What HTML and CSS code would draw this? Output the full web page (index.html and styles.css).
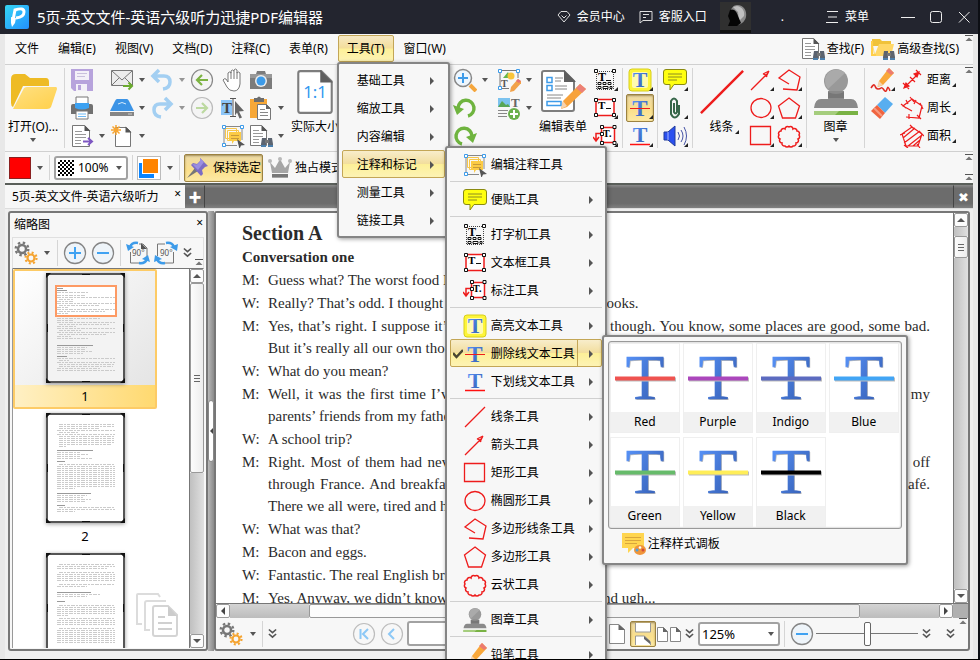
FILE: index.html
```html
<!DOCTYPE html>
<html lang="zh-CN">
<head>
    <meta charset="UTF-8">
    <title>迅捷PDF编辑器</title>
    <link rel="stylesheet" href="styles.css">
</head>
<body>
    <!-- Iconos -->
    <svg class="sprite" aria-hidden="true">
        <defs>
            <linearGradient id="gT" x1="0" y1="0" x2="1" y2="1"><stop offset="0" stop-color="#5b98ff"/><stop offset="1" stop-color="#2f55a8"/></linearGradient>
            <linearGradient id="gLogo" x1="0" y1="0" x2="1" y2="1"><stop offset="0" stop-color="#35d6f5"/><stop offset="1" stop-color="#2390ff"/></linearGradient>
            <linearGradient id="gFolder" x1="0" y1="0" x2="1" y2="1"><stop offset="0" stop-color="#ffe082"/><stop offset="1" stop-color="#ffd04a"/></linearGradient>
        </defs>
        <symbol id="i-logo" viewBox="0 0 24 24"><rect width="24" height="24" rx="2" fill="url(#gLogo)"/><path d="M8 15L10 5q9-3 9 2t-8 6" fill="none" stroke="#fff" stroke-width="3"/><path d="M6 12l5 1-1 5-3 4-1-4z" fill="#fff"/></symbol>
        <symbol id="i-vip" viewBox="0 0 14 14"><path d="M4 1.500h6l3 3.500-6 7-6-7z" fill="none" stroke="#ddd"/><path d="M4.500 5.500L7 8l2.500-2.500" fill="none" stroke="#ddd"/></symbol>
        <symbol id="i-chat" viewBox="0 0 14 14"><path d="M1 1.500h12v9H4L1 13z" fill="none" stroke="#ddd"/><path d="M4 4.500h6M4 7.500h3" stroke="#ddd"/></symbol>
        <symbol id="i-menu" viewBox="0 0 14 14"><path d="M2 1.500h11M3 7h9M1 12.500h12" stroke="#eee"/></symbol>
        <symbol id="i-min" viewBox="0 0 14 14"><path d="M0 7.500h14" stroke="#eee"/></symbol>
        <symbol id="i-max" viewBox="0 0 14 14"><rect x="1.500" y="1.500" width="11" height="11" rx="2" fill="none" stroke="#eee"/></symbol>
        <symbol id="i-close" viewBox="0 0 14 14"><path d="M2 2l10.500 10.500M12.500 2L2 12.500" stroke="#eee"/></symbol>
        <symbol id="i-avatar" viewBox="0 0 31 31"><rect width="31" height="31" fill="#303030"/><path d="M17 3c7 0 10 6 9 12-1 4-4 7-8 8l-2-8-5-6c0-3 3-6 6-6z" fill="#8a8a8a"/><path d="M17 4c6 1 8 6 7 10l-5 5-1-9-5-5z" fill="#c0c0c0"/><path d="M10 8c4-2 7 2 8 6l3 7-4 3H8l2-5-2-5z" fill="#050505"/><path d="M0 29.500h31" stroke="#111" stroke-width="3"/></symbol>

        <symbol id="i-folder" viewBox="0 0 48 38"><path d="M2 6q0-5 5-5h9l5 4h16q3 0 3 4v4H14L4 34q-2-1-2-4z" fill="#eebb25"/><path d="M14 17q1-3 4-3h29q1 0 1 2l-6 18q-1 2-4 2H4z" fill="url(#gFolder)"/></symbol>
        <symbol id="i-save" viewBox="0 0 24 24"><path d="M1 1h22v22H4l-3-3z" fill="#b7a3dc"/><path d="M5 3h14v9H5zM6 16h11v7H6z" fill="#f3f0f8"/><path d="M7 5.500h10M7 8.500h8" stroke="#c9c0dd"/><path d="M8 17h3v5H8z" fill="#b7a3dc"/></symbol>
        <symbol id="i-print" viewBox="0 0 24 24"><path d="M6 9V1h12v8" fill="#fff" stroke="#777"/><path d="M1 10q0-2 2-2h18q2 0 2 2v8H1z" fill="#717171"/><path d="M5 7h14v5q-7 3-14 0z" fill="#3da2f2"/><path d="M6 15h12v8H6z" fill="#fff" stroke="#777"/><path d="M8 18h8M8 20.500h8" stroke="#6fbaf5"/></symbol>
        <symbol id="i-export" viewBox="0 0 24 24"><path d="M2.500 1.500h12l5 5v16h-17z" fill="#fff" stroke="#777"/><path d="M14.500 1v6h6z" fill="#555"/><path d="M5 7.500h7M5 10.500h11M5 13.500h11M5 16.500h6M5 19.500h6" stroke="#999"/><path d="M13 17.500h8M18 14l4 3.500-4 3.500" fill="none" stroke="#7e57c2" stroke-width="2"/></symbol>
        <symbol id="i-mail" viewBox="0 0 24 24"><path d="M1.500 2.500h21v15h-21z" fill="#ececec" stroke="#777"/><path d="M2 3l10 9L22 3M2 17l7-7M22 17l-7-7" fill="none" stroke="#777"/><path d="M13 18h9M18.500 14.500L22 18l-3.500 3.500" fill="none" stroke="#6aaa2e" stroke-width="2"/></symbol>
        <symbol id="i-scan" viewBox="0 0 24 24"><path d="M7 3h10q1 0 2 2l5 10H0L5 5q1-2 2-2z" fill="#3c94e6"/><path d="M0 16h24v4H0z" fill="#858585"/><path d="M18 18h4" stroke="#ccc"/><path d="M8 8q4-3 8 0" stroke="#d6ebfc" fill="none"/></symbol>
        <symbol id="i-new" viewBox="0 0 24 24"><path d="M5.500 3.500h11l4 4v15h-15z" fill="#fff" stroke="#777"/><path d="M15.500 2.500v6h6z" fill="#555"/><path d="M1 6h10M6 1v10M2.500 2.500l7 7M9.500 2.500l-7 7" stroke="#f7a531" stroke-width="1.500"/></symbol>
        <symbol id="i-undo" viewBox="0 0 24 24"><path d="M9 2L3 8l6 6M3 8h11q6 0 6 6t-7 7" fill="none" stroke="#a3cff2" stroke-width="3.500"/></symbol>
        <symbol id="i-redo" viewBox="0 0 24 24"><path d="M15 2l6 6-6 6M21 8H10q-6 0-6 6t7 7" fill="none" stroke="#a3cff2" stroke-width="3.500"/></symbol>
        <symbol id="i-back" viewBox="0 0 24 24"><circle cx="12" cy="12" r="10.500" fill="#f4f4f4" stroke="#888" stroke-width="1.200"/><path d="M18 12H8M12 7l-5 5 5 5" fill="none" stroke="#7cb342" stroke-width="2.200"/></symbol>
        <symbol id="i-fwd" viewBox="0 0 24 24"><circle cx="12" cy="12" r="10.500" fill="#f4f4f4" stroke="#bbb" stroke-width="1.200"/><path d="M6 12h10M12 7l5 5-5 5" fill="none" stroke="#bcd9a0" stroke-width="2.200"/></symbol>
        <symbol id="i-hand" viewBox="0 0 24 24"><path d="M7 14V5q1.500-2 3 0V3q1.500-2 3 0V2q1.500-2 3 0v3q1.500-2 3 0v11q-1 7-6 7-5 0-7-4l-4-7q1-2 3-1z" fill="#fff" stroke="#777"/><path d="M10 4v7M13 3v8M16 4v7" stroke="#777"/></symbol>
        <symbol id="i-seltext" viewBox="0 0 24 24"><path d="M0 4h11v15H0z" fill="#8cc5f8"/><text x="1" y="17" font-family="Liberation Serif" font-weight="bold" font-size="15" fill="#444">T</text><path d="M9 2.500h6M12 2.500v18M9 20.500h6" stroke="#555"/><path d="M14 5l9 10-5 .5 3 6-2.500 1-2.500-6-2 3z" fill="#666"/></symbol>
        <symbol id="i-notes" viewBox="0 0 24 24"><path d="M4.500 4.500h11v10h-11zM6.500 6.500h11v10h-11z" fill="none" stroke="#f7c64a"/><path d="M8 8h12v9h-7l-2 3v-3H8z" fill="#fbcb45"/><path d="M10 11.500h8M10 14.500h8" stroke="#c79a3a"/><path d="M3 4v17M21 4v12M4 2.500h16M4 21.500h12" stroke="#888"/><path d="M1.500 1.500h3v3h-3zM19.500 1.500h3v3h-3zM1.500 19.500h3v3h-3z" fill="#fff" stroke="#3d9be9"/><path d="M16 15l8 6-4 .5-1.500 3.500z" fill="#555"/></symbol>
        <symbol id="i-camera" viewBox="0 0 24 24"><path d="M1 6h6l1-3h8l1 3h6v15H1z" fill="#7c7c7c"/><path d="M1 6h22v4H1z" fill="#999"/><circle cx="12" cy="13" r="6" fill="#eee"/><circle cx="12" cy="13" r="4.500" fill="#3d9be9"/></symbol>
        <symbol id="i-paste" viewBox="0 0 24 24"><path d="M1 3h17v19H1z" fill="#f7a838"/><path d="M5 2h3q2-3 4 0h3v4H5z" fill="#6d6d6d"/><path d="M8.500 8.500h9l4 4v11h-13z" fill="#fff" stroke="#777"/><path d="M11 13.500h5M11 16.500h8M11 19.500h8" stroke="#888"/><path d="M17 8v5h5z" fill="#666"/></symbol>
        <symbol id="i-find" viewBox="0 0 24 24"><path d="M1.500 1.500h11l5 5v15h-16z" fill="#fff" stroke="#777"/><path d="M12.500 1v6h6z" fill="#555"/><path d="M4 6.500h6M4 9.500h10M4 12.500h10M4 15.500h6M4 18.500h6" stroke="#999"/><path d="M13 14h4v9h-5v-3zM19 14h4l1 6v3h-5z" fill="#5c6470"/><path d="M16 16h4v3h-4z" fill="#777"/><path d="M12 22h5M19 22h5" stroke="#3d9be9"/></symbol>
        <symbol id="i-ffind" viewBox="0 0 24 24"><path d="M1 2h8l2 2h9v5H1z" fill="#f0c23a"/><path d="M1 4l2 15h17l3-12H8L4 17z" fill="#ffd766"/><path d="M1 4v14h4" stroke="#ffcf4a" fill="none" stroke-width="2"/><path d="M13 14h4v9h-5v-3zM19 14h4l1 6v3h-5z" fill="#5c6470"/><path d="M16 16h4v3h-4z" fill="#777"/><path d="M12 22h5M19 22h5" stroke="#3d9be9"/></symbol>
        <symbol id="i-actual" viewBox="0 0 36 44"><path d="M2 4q0-2 2-2h20l10 10v28q0 2-2 2H4q-2 0-2-2z" fill="#fff" stroke="#7d7d7d" stroke-width="2"/><path d="M23 1v12h12z" fill="#5f5f5f"/><text x="18" y="28" text-anchor="middle" font-family="Noto Sans" font-size="16" fill="#3498f0">1:1</text></symbol>
        <symbol id="i-zoom" viewBox="0 0 24 24"><path d="M17 17l6 6" stroke="#f5a63c" stroke-width="4"/><circle cx="10" cy="10" r="8.500" fill="#eef6fd" stroke="#888" stroke-width="1.500"/><path d="M10 5v10M5 10h10" stroke="#3d9be9" stroke-width="2"/></symbol>
        <symbol id="i-ccw" viewBox="0 0 24 24"><path d="M5 12a8 8 0 1 1 10 8" fill="none" stroke="#6fb43f" stroke-width="3.500"/><path d="M0 9l11 4-7 6z" fill="#6fb43f"/></symbol>
        <symbol id="i-cw" viewBox="0 0 24 24"><path d="M19 12a8 8 0 1 0-10 8" fill="none" stroke="#6fb43f" stroke-width="3.500"/><path d="M24 9l-11 4 7 6z" fill="#6fb43f"/></symbol>
        <symbol id="i-edit" viewBox="0 0 24 24"><path d="M3 4v16M21 4v6M4 2.500h16M4 20.500h8" stroke="#777"/><path d="M6 10l5-6 3 6z" fill="#65b64c"/><circle cx="14" cy="8" r="3.500" fill="#f9c53b"/><text x="4" y="19" font-family="Liberation Serif" font-weight="bold" font-size="10" fill="#555">T</text><path d="M1.500 1.500h3v3h-3zM19.500 1.500h3v3h-3zM1.500 18.500h3v3h-3z" fill="#fff" stroke="#3d9be9"/><path d="M21 11l4 3-8 9-4 1 1-5z" fill="#f2a24a"/><path d="M21 11l3 2-2 2-3-2z" fill="#e57373"/></symbol>
        <symbol id="i-addimg" viewBox="0 0 24 24"><path d="M1 2h12v9H1z" fill="#7cc3ef"/><path d="M1 11l4-6 4 4 2-1 2 3z" fill="#58a657"/><text x="14" y="11" font-family="Liberation Serif" font-weight="bold" font-size="13" fill="#666">T</text><path d="M1 14.500h10M1 17.500h9M1 20.500h9" stroke="#888"/><circle cx="17" cy="18" r="6" fill="#6ab04c"/><path d="M17 14v8M13 18h8" stroke="#fff" stroke-width="2"/></symbol>
        <symbol id="i-form" viewBox="0 0 46 46"><path d="M2 4q0-2 2-2h20l10 10v28q0 2-2 2H4q-2 0-2-2z" fill="#fff" stroke="#7d7d7d" stroke-width="2"/><path d="M24 1v12h12z" fill="#5f5f5f"/><path d="M7 8.500h5v5H7zM7 16.500h5v5H7zM7 32.500h14v4H7z" fill="none" stroke="#3d9be9" stroke-width="1.500"/><path d="M15 9h8M15 12h6M15 17h12M15 20h12M7 26h16M7 29h14" stroke="#888"/><path d="M40 15l6 5-19 18-6 2 2-8z" fill="#f7a23b"/><path d="M40 15l6 5-4 4-6-5z" fill="#ec8077"/><path d="M23 32l4 5-6 3z" fill="#f6d3b0"/></symbol>

        <symbol id="i-type" viewBox="0 0 24 24"><path d="M3.500 4v17M20.500 4v17M4 3.500h16M4 21.500h16" stroke="#444" stroke-dasharray="1 1"/><path d="M1.500 1.500h3v3h-3zM19.500 1.500h3v3h-3z" fill="#fff" stroke="#111"/><text x="5" y="13" font-family="Liberation Serif" font-weight="bold" font-size="12">T</text><path d="M13 12.500h5" stroke="#111"/><path d="M5 14.500h3v2H5zM10 14.500h3v2h-3zM15 14.500h3v2h-3zM5 18.500h3v2H5zM10 18.500h5v2h-5zM17 18.500h2v2h-2z" fill="#fff" stroke="#111"/></symbol>
        <symbol id="i-textbox" viewBox="0 0 24 24"><path d="M3 3.500h18v16H3z" fill="#fff" stroke="#ee1c1c" stroke-width="1.500"/><text x="5" y="13" font-family="Liberation Serif" font-weight="bold" font-size="11">T</text><path d="M13 12.500h5" stroke="#111"/><path d="M1.500 2.500h3v3h-3zM19.500 2.500h3v3h-3zM1.500 17.500h3v3h-3zM19.500 17.500h3v3h-3z" fill="#fff" stroke="#111"/></symbol>
        <symbol id="i-callout" viewBox="0 0 24 24"><path d="M8.500 3.500h13v15h-13z" fill="#fff" stroke="#ee1c1c" stroke-width="1.500"/><path d="M8 9.500H3V17M0 13l3 4 3-4" fill="none" stroke="#ee1c1c" stroke-width="1.500"/><text x="10" y="13" font-family="Liberation Serif" font-weight="bold" font-size="10">T.</text><path d="M7.500 1.500h3v3h-3zM20 1.500h3v3h-3zM7.500 8.500h3v3h-3zM7.500 17.500h3v3h-3zM20 17.500h3v3h-3z" fill="#fff" stroke="#111"/></symbol>
        <symbol id="i-hl" viewBox="0 0 24 24"><rect x="1" y="1" width="22" height="22" rx="3" fill="#fdf53a" stroke="#d8cf1a"/><rect x="4" y="4" width="16" height="16" rx="2" fill="#fffbb0"/><text x="12" y="19" text-anchor="middle" font-family="Liberation Serif" font-weight="bold" font-size="22" fill="url(#gT)">T</text></symbol>
        <symbol id="i-strike" viewBox="0 0 24 24"><text x="12" y="20" text-anchor="middle" font-family="Liberation Serif" font-weight="bold" font-size="23" fill="url(#gT)">T</text><path d="M2 12.500h20" stroke="#ee1c1c"/></symbol>
        <symbol id="i-under" viewBox="0 0 24 24"><text x="12" y="18" text-anchor="middle" font-family="Liberation Serif" font-weight="bold" font-size="22" fill="url(#gT)">T</text><path d="M2 20.500h20" stroke="#ff1010" stroke-width="1.500"/></symbol>
        <symbol id="i-note" viewBox="0 0 24 24"><path d="M3 1.500h18q2.500 0 2.500 2.500v10q0 2.500-2.500 2.500H11L7 22v-5.500H3Q.5 16.500.5 14V4Q.5 1.500 3 1.500z" fill="#ffff10" stroke="#8a8a10"/><path d="M5 6h14M5 9h14M5 12h9" stroke="#8c8c20"/></symbol>
        <symbol id="i-clip" viewBox="0 0 24 24"><path d="M11 7v9q1.500 3 3 0V5q-3-5-6 0v13q3.500 7 8 0V9" fill="none" stroke="#37674a" stroke-width="2"/></symbol>
        <symbol id="i-sound" viewBox="0 0 24 24"><path d="M1 8h4l7-6v20l-7-6H1z" fill="#2a50f0" stroke="#203a9a"/><path d="M5 8v8" stroke="#a8b8ff"/><path d="M15 8q3 4 0 8M18 6q4 6 0 12M21 3q5 9 0 18" fill="none" stroke="#4452a5"/></symbol>
        <symbol id="i-line" viewBox="0 0 24 24"><path d="M2 22L22 2" stroke="#ee1c1c" stroke-width="1.300"/></symbol>
        <symbol id="i-arrow" viewBox="0 0 24 24"><path d="M2 22L19 5M20 3l-6 3M20 3l-3 6M14 6l3 1 1 2" fill="none" stroke="#ee1c1c" stroke-width="1.300"/></symbol>
        <symbol id="i-rect" viewBox="0 0 24 24"><path d="M1.500 2.500h20v18h-20z" fill="none" stroke="#ee1c1c" stroke-width="1.300"/></symbol>
        <symbol id="i-ell" viewBox="0 0 24 24"><ellipse cx="12" cy="12" rx="10" ry="9.500" fill="none" stroke="#ee1c1c" stroke-width="1.300"/></symbol>
        <symbol id="i-pline" viewBox="0 0 24 24"><path d="M12 16L2 10 12 2l11 7-3 13-14-1" fill="none" stroke="#ee1c1c" stroke-width="1.300"/></symbol>
        <symbol id="i-poly" viewBox="0 0 24 24"><path d="M12 2l10.500 8-4 12h-13l-4-12z" fill="none" stroke="#ee1c1c" stroke-width="1.300"/></symbol>
        <symbol id="i-cloud" viewBox="0 0 24 24"><path d="M8 5a2.500 2.500 0 0 1 4-2 2.500 2.500 0 0 1 4 2 2.500 2.500 0 0 1 4 2 2.500 2.500 0 0 1 2 4 2.500 2.500 0 0 1-1 4 2.500 2.500 0 0 1-2 4 2.500 2.500 0 0 1-3 3 2.500 2.500 0 0 1-4 0 2.500 2.500 0 0 1-4 0 2.500 2.500 0 0 1-3-3 2.500 2.500 0 0 1-2-4 2.500 2.500 0 0 1-1-4 2.500 2.500 0 0 1 2-4 2.500 2.500 0 0 1 4-2z" fill="none" stroke="#ee1c1c" stroke-width="1.500"/></symbol>
        <symbol id="i-bigline" viewBox="0 0 48 48"><path d="M2 46L46 2" stroke="#ee1c1c" stroke-width="2.500"/></symbol>
        <symbol id="i-stamp" viewBox="0 0 46 46"><circle cx="23" cy="12" r="12" fill="#999"/><path d="M15 4a12 12 0 0 1 17 0L15 20a12 12 0 0 1 0-16z" fill="#aaa"/><path d="M15 22h16v8h7q6 0 7 9H1q1-9 7-9h7z" fill="#8a8a8a"/><path d="M15 23q8 4 16 0v6H15z" fill="#777"/><path d="M1 42h44v4H1z" fill="#79b244"/><path d="M1 42h25l-4 4H1z" fill="#a5cd7d"/></symbol>
        <symbol id="i-pencil" viewBox="0 0 24 24"><path d="M19 0l5 5-11 12-5 2 1-6z" fill="#f9a83a"/><path d="M19 0l5 5-3 2-5-4z" fill="#ec7b70"/><path d="M9 13l4 4-6 2z" fill="#f3d2ae"/><path d="M1 20q3-5 4-2t3 3 3-1 3 2 3-1 3 2" fill="none" stroke="#e02a20" stroke-width="1.500"/></symbol>
        <symbol id="i-eraser" viewBox="0 0 24 24"><path d="M15 1l8 7-8 9-8-8z" fill="#58aef0"/><path d="M7 9l8 8-5 6-9-8z" fill="#f0643f"/><path d="M4 12l8 8" stroke="#f79a80" stroke-width="2"/></symbol>
        <symbol id="i-dist" viewBox="0 0 24 24"><path d="M5 19L19 5M19 4l-5 2 3 3zM4 20l2-5 3 3zM16 2l5 5M3 15l6 6M10 9l5 5" fill="#ee1c1c" stroke="#ee1c1c" stroke-width="1.200"/></symbol>
        <symbol id="i-perim" viewBox="0 0 24 24"><path d="M12 15L3 10l9-7 10 7-3 12-13-1M10 1l4 5M20 7l3 6M1 8l5 4M17 19l4 4M9 18v5M16 4l-2 4M6 4l2 4" fill="none" stroke="#ee1c1c" stroke-width="1.200"/></symbol>
        <symbol id="i-area" viewBox="0 0 24 24"><path d="M12 3l10 7-4 12H6L2 10zM3 14L15 4M4 19L20 7M8 22L22 11M13 22l7-6M10 1l4 4M20 8l4 4M0 11l5-2M4 21l4 3M17 20l3 4" fill="none" stroke="#ee1c1c" stroke-width="1.200"/></symbol>
        <symbol id="i-palette" viewBox="0 0 24 24"><path d="M0 1h22v15H11l-5 5v-5H0z" fill="#ffd54f"/><path d="M3 5.500h16M3 8.500h16M3 11.500h12" stroke="#d9a63c"/><ellipse cx="18" cy="18" rx="6" ry="5" fill="#f0953a"/><circle cx="15" cy="18" r="1.500" fill="#4aa3e0"/><circle cx="18" cy="15.500" r="1.300" fill="#fff"/><circle cx="21" cy="18" r="1.500" fill="#d24a3a"/></symbol>
        <symbol id="i-pin" viewBox="0 0 24 24"><path d="M1 22l8-10 3 3z" fill="#777"/><path d="M14 2l8 8-3 1-3 3 1 4-2 2L5 9l2-2 4 1 3-3z" fill="#7c6cc4"/><path d="M14 2l4 4-6 8-6-6 5 .5 3-3z" fill="#9a8ee0"/></symbol>
        <symbol id="i-crown" viewBox="0 0 24 24"><path d="M2 6l5 6 5-9 5 9 5-6-2 11H4zM4 18h16v4H4z" fill="#a5a5a5"/><path d="M4 19.500h16" stroke="#777" stroke-width="3"/><circle cx="2" cy="5" r="2" fill="#b9b9b9"/><circle cx="12" cy="3" r="2" fill="#b9b9b9"/><circle cx="22" cy="5" r="2" fill="#b9b9b9"/></symbol>
        <symbol id="i-fill" viewBox="0 0 24 24"><rect x=".5" y=".5" width="23" height="23" fill="#fff" stroke="#bbb"/><path d="M2 7h15v15H2z" fill="#0a84ff"/><path d="M5 2h17v16H5z" fill="#fff"/><path d="M6 3h15v14H6z" fill="#ff8400"/></symbol>
        <symbol id="i-gears" viewBox="0 0 24 24"><circle cx="8" cy="8" r="4" fill="none" stroke="#777" stroke-width="2.500"/><circle cx="8" cy="8" r="6.300" fill="none" stroke="#777" stroke-width="2.400" stroke-dasharray="2.400 2.550"/><circle cx="17" cy="17" r="3.500" fill="none" stroke="#f5a431" stroke-width="2.200"/><circle cx="17" cy="17" r="5.500" fill="none" stroke="#f5a431" stroke-width="2.200" stroke-dasharray="2 2.320"/></symbol>
        <symbol id="i-plus" viewBox="0 0 24 24"><circle cx="12" cy="12" r="10.500" fill="#eef4f9" stroke="#858585" stroke-width="1.300"/><path d="M12 6v12M6 12h12" stroke="#3fa2f2" stroke-width="2"/></symbol>
        <symbol id="i-minus" viewBox="0 0 24 24"><circle cx="12" cy="12" r="10.500" fill="#eef4f9" stroke="#858585" stroke-width="1.300"/><path d="M6 12h12" stroke="#3fa2f2" stroke-width="2"/></symbol>
        <symbol id="i-first" viewBox="0 0 24 24"><circle cx="12" cy="12" r="10.500" fill="#f7f7f7" stroke="#bdbdbd" stroke-width="1.200"/><path d="M8.500 7v10M16 7l-5 5 5 5" fill="none" stroke="#8cc8f6" stroke-width="2"/></symbol>
        <symbol id="i-prev" viewBox="0 0 24 24"><circle cx="12" cy="12" r="10.500" fill="#f7f7f7" stroke="#bdbdbd" stroke-width="1.200"/><path d="M14 7l-5 5 5 5" fill="none" stroke="#8cc8f6" stroke-width="2"/></symbol>
        <symbol id="i-rotl" viewBox="0 0 24 24"><path d="M4.500 11v11h9M13 3h4l4 4v9" fill="none" stroke="#777"/><path d="M15 2v6h6z" fill="#555"/><text x="6" y="15" font-family="Noto Sans" font-size="8" fill="#555">90°</text><path d="M12 2Q6 1 4 6M13 22q6 1 8-4" fill="none" stroke="#3d9be9" stroke-width="2.500"/><path d="M0 3l2 7 6-4zM24 21l-2-7-6 4z" fill="#3d9be9"/></symbol>
        <symbol id="i-rotr" viewBox="0 0 24 24"><path d="M19.500 11v11h-9M11 3H3.500v12" fill="none" stroke="#777"/><text x="6" y="15" font-family="Noto Sans" font-size="8" fill="#555">90°</text><path d="M12 2q6-1 8 4M11 22q-6 1-8-4" fill="none" stroke="#3d9be9" stroke-width="2.500"/><path d="M24 3l-1 7-7-4zM0 21l1-7 7 4z" fill="#3d9be9"/></symbol>
        <symbol id="i-more" viewBox="0 0 10 12"><path d="M1 1l4 3.500L9 1M1 6l4 3.500L9 6" fill="none" stroke="#555" stroke-width="1.800"/></symbol>
        <symbol id="i-over" viewBox="0 0 8 8"><path d="M0 .5h8" stroke="#555"/><path d="M4 2.500L7.500 6h-7z" fill="#777"/></symbol>
        <symbol id="i-page" viewBox="0 0 18 24"><path d="M1.500 2.500h9l6 5v14h-15z" fill="#fff" stroke="#888"/><path d="M10.500 2v6H17z" fill="#666"/></symbol>
        <symbol id="i-cont" viewBox="0 0 24 24"><path d="M4.500 1v9h15V1" fill="#fff" stroke="#999"/><path d="M4.500 23v-9h9l6 6v3" fill="#fff" stroke="#999"/><path d="M13 14v3l6 5v-3z" fill="#666"/></symbol>
        <symbol id="i-two" viewBox="0 0 24 24"><path d="M.5 5.500h6l4 4v10H.5zM13.500 5.500h6l4 4v10h-10z" fill="#fff" stroke="#888"/><path d="M6 5v5h5zM19 5v5h5z" fill="#666"/></symbol>
        <symbol id="i-check" viewBox="0 0 10 10"><path d="M0 4l3.500 4L10 1" fill="none" stroke="#4a4632" stroke-width="2.500"/></symbol>
        <symbol id="i-pages" viewBox="0 0 42 46"><path d="M6 31H1V2q0-1 1-1h20l2 3M14 37H9V10q0-2 2-2h19" fill="none" stroke="#dcdcdc" stroke-width="2"/><path d="M17 15q0-2 2-2h13l9 9v19q0 2-2 2H19q-2 0-2-2z" fill="#fff" stroke="#d4d4d4" stroke-width="2"/><path d="M32 13v10h9z" fill="#ccc"/><path d="M22 24h7M22 30h14M22 36h14" stroke="#d0d0d0" stroke-width="2"/></symbol>
        <symbol id="i-bigT" viewBox="0 0 68 68"><text x="35" y="56" text-anchor="middle" font-family="Liberation Serif" font-size="63" fill="#bbb">T</text><text x="34" y="55" text-anchor="middle" font-family="Liberation Serif" font-size="63" fill="url(#gT)" stroke="url(#gT)" stroke-width=".6">T</text><path d="M5 35.500h60" stroke="#bbb" stroke-width="4"/><path d="M4 34.500h60" stroke="currentColor" stroke-width="4"/></symbol>
        <symbol id="i-frame" viewBox="0 0 79 110"><path d="M0 0h5L0 5zM79 0v5l-5-5zM0 110v-5l5 5zM79 110h-5l5-5zM36 1h8v1h-8zM36 108h8v1h-8zM1 51h1v8H1zM77 51h1v8h-1z" fill="#111"/></symbol>
    </svg>

    <header class="titlebar">
        <svg class="ic24"><use href="#i-logo"/></svg>
        <h1 class="app-title">5页-英文文件-英语六级听力迅捷PDF编辑器</h1>
        <button class="title-link"><svg class="ic14"><use href="#i-vip"/></svg>会员中心</button>
        <button class="title-link"><svg class="ic14"><use href="#i-chat"/></svg>客服入口</button>
        <svg class="avatar"><use href="#i-avatar"/></svg>
        <span class="user-name">.</span>
        <button class="title-link"><svg class="ic14"><use href="#i-menu"/></svg>菜单</button>
        <div class="window-buttons">
            <button aria-label="最小化"><svg class="ic14"><use href="#i-min"/></svg></button>
            <button aria-label="最大化"><svg class="ic14"><use href="#i-max"/></svg></button>
            <button aria-label="关闭"><svg class="ic14"><use href="#i-close"/></svg></button>
        </div>
    </header>

    <div class="client">
        <nav class="menubar">
            <button>文件</button>
            <button>编辑(E)</button>
            <button>视图(V)</button>
            <button>文档(D)</button>
            <button>注释(C)</button>
            <button>表单(R)</button>
            <div class="menu-root">
                <button class="open">工具(T)</button>
                <ul class="menu menu-tools">
                    <li><button>基础工具</button></li>
                    <li><button>缩放工具</button></li>
                    <li><button>内容编辑</button></li>
                    <li>
                        <button class="selected">注释和标记</button>
                        <ul class="menu menu-annot">
                            <li><button class="leaf"><svg class="ic24"><use href="#i-notes"/></svg>编辑注释工具</button></li>
                            <li class="divider"></li>
                            <li><button><svg class="ic24"><use href="#i-note"/></svg>便贴工具</button></li>
                            <li class="divider"></li>
                            <li><button><svg class="ic24"><use href="#i-type"/></svg>打字机工具</button></li>
                            <li><button><svg class="ic24"><use href="#i-textbox"/></svg>文本框工具</button></li>
                            <li><button><svg class="ic24"><use href="#i-callout"/></svg>标注工具</button></li>
                            <li class="divider"></li>
                            <li><button><svg class="ic24"><use href="#i-hl"/></svg>高亮文本工具</button></li>
                            <li>
                                <button class="selected split"><svg class="check"><use href="#i-check"/></svg><svg class="ic24"><use href="#i-strike"/></svg>删除线文本工具</button>
                                <div class="gallery-popup">
                                    <div class="gallery">
                                        <button class="swatch red"><svg><use href="#i-bigT"/></svg><span>Red</span></button>
                                        <button class="swatch purple"><svg><use href="#i-bigT"/></svg><span>Purple</span></button>
                                        <button class="swatch indigo"><svg><use href="#i-bigT"/></svg><span>Indigo</span></button>
                                        <button class="swatch blue"><svg><use href="#i-bigT"/></svg><span>Blue</span></button>
                                        <button class="swatch green"><svg><use href="#i-bigT"/></svg><span>Green</span></button>
                                        <button class="swatch yellow"><svg><use href="#i-bigT"/></svg><span>Yellow</span></button>
                                        <button class="swatch black"><svg><use href="#i-bigT"/></svg><span>Black</span></button>
                                    </div>
                                    <button class="palette-link"><svg class="ic24"><use href="#i-palette"/></svg>注释样式调板</button>
                                </div>
                            </li>
                            <li><button><svg class="ic24"><use href="#i-under"/></svg>下划线文本工具</button></li>
                            <li class="divider"></li>
                            <li><button><svg class="ic24"><use href="#i-line"/></svg>线条工具</button></li>
                            <li><button><svg class="ic24"><use href="#i-arrow"/></svg>箭头工具</button></li>
                            <li><button><svg class="ic24"><use href="#i-rect"/></svg>矩形工具</button></li>
                            <li><button><svg class="ic24"><use href="#i-ell"/></svg>椭圆形工具</button></li>
                            <li><button><svg class="ic24"><use href="#i-pline"/></svg>多边形线条工具</button></li>
                            <li><button><svg class="ic24"><use href="#i-poly"/></svg>多边形工具</button></li>
                            <li><button><svg class="ic24"><use href="#i-cloud"/></svg>云状工具</button></li>
                            <li class="divider"></li>
                            <li><button><svg class="ic24"><use href="#i-stamp"/></svg>图章工具</button></li>
                            <li class="divider"></li>
                            <li><button><svg class="ic24"><use href="#i-pencil"/></svg>铅笔工具</button></li>
                        </ul>
                    </li>
                    <li><button>测量工具</button></li>
                    <li><button>链接工具</button></li>
                </ul>
            </div>
            <button>窗口(W)</button>
            <div class="menubar-right">
                <button><svg class="ic24"><use href="#i-find"/></svg>查找(F)</button>
                <button><svg class="ic24"><use href="#i-ffind"/></svg>高级查找(S)</button>
                <svg class="over"><use href="#i-over"/></svg>
            </div>
        </nav>

        <div class="toolbar">
            <button class="big open-file"><svg class="ic48"><use href="#i-folder"/></svg>打开(O)...<i class="caret"></i></button>
            <i class="sep"></i>
            <div class="col">
                <button class="tool" aria-label="保存"><svg class="ic24"><use href="#i-save"/></svg></button>
                <button class="tool" aria-label="打印"><svg class="ic24"><use href="#i-print"/></svg></button>
                <button class="tool drop" aria-label="导出"><svg class="ic24"><use href="#i-export"/></svg><i class="caret"></i></button>
            </div>
            <div class="col">
                <button class="tool drop" aria-label="邮件"><svg class="ic24"><use href="#i-mail"/></svg><i class="caret"></i></button>
                <button class="tool drop" aria-label="扫描"><svg class="ic24"><use href="#i-scan"/></svg><i class="caret"></i></button>
                <button class="tool drop" aria-label="新建"><svg class="ic24"><use href="#i-new"/></svg><i class="caret"></i></button>
            </div>
            <div class="col">
                <button class="tool drop off" aria-label="撤销"><svg class="ic24"><use href="#i-undo"/></svg><i class="caret"></i></button>
                <button class="tool drop off" aria-label="重做"><svg class="ic24"><use href="#i-redo"/></svg><i class="caret"></i></button>
            </div>
            <div class="col history">
                <button class="tool" aria-label="后退"><svg class="ic24"><use href="#i-back"/></svg></button>
                <button class="tool" aria-label="前进"><svg class="ic24"><use href="#i-fwd"/></svg></button>
            </div>
            <div class="col">
                <button class="tool" aria-label="手形"><svg class="ic24"><use href="#i-hand"/></svg></button>
                <button class="tool" aria-label="选择文本"><svg class="ic24"><use href="#i-seltext"/></svg></button>
                <button class="tool" aria-label="编辑注释"><svg class="ic24"><use href="#i-notes"/></svg></button>
            </div>
            <div class="col">
                <button class="tool" aria-label="快照"><svg class="ic24"><use href="#i-camera"/></svg></button>
                <button class="tool drop" aria-label="剪贴板"><svg class="ic24"><use href="#i-paste"/></svg><i class="caret"></i></button>
                <button class="tool drop" aria-label="查找"><svg class="ic24"><use href="#i-find"/></svg><i class="caret"></i></button>
            </div>
            <button class="big"><svg class="ic48"><use href="#i-actual"/></svg>实际大小</button>
            <div class="col after-zoom">
                <button class="tool drop" aria-label="放大"><svg class="ic24"><use href="#i-zoom"/></svg><i class="caret"></i></button>
                <button class="tool" aria-label="逆时针旋转"><svg class="ic24"><use href="#i-ccw"/></svg></button>
                <button class="tool" aria-label="顺时针旋转"><svg class="ic24"><use href="#i-cw"/></svg></button>
            </div>
            <div class="col">
                <button class="tool drop" aria-label="编辑内容"><svg class="ic24"><use href="#i-edit"/></svg><i class="caret"></i></button>
                <button class="tool drop" aria-label="添加内容"><svg class="ic24"><use href="#i-addimg"/></svg><i class="caret"></i></button>
            </div>
            <button class="big"><svg class="ic48"><use href="#i-form"/></svg>编辑表单</button>
            <div class="col">
                <button class="tool tick" aria-label="打字机"><svg class="ic24"><use href="#i-type"/></svg></button>
                <button class="tool tick" aria-label="文本框"><svg class="ic24"><use href="#i-textbox"/></svg></button>
                <button class="tool tick" aria-label="标注"><svg class="ic24"><use href="#i-callout"/></svg></button>
            </div>
            <i class="sep"></i>
            <div class="col">
                <button class="tool tick" aria-label="高亮"><svg class="ic24"><use href="#i-hl"/></svg></button>
                <button class="tool tick pressed" aria-label="删除线"><svg class="ic24"><use href="#i-strike"/></svg></button>
                <button class="tool tick" aria-label="下划线"><svg class="ic24"><use href="#i-under"/></svg></button>
            </div>
            <i class="sep"></i>
            <div class="col">
                <button class="tool tick" aria-label="便贴"><svg class="ic24"><use href="#i-note"/></svg></button>
                <button class="tool tick" aria-label="附件"><svg class="ic24"><use href="#i-clip"/></svg></button>
                <button class="tool tick" aria-label="声音"><svg class="ic24"><use href="#i-sound"/></svg></button>
            </div>
            <i class="sep"></i>
            <button class="big narrow"><svg class="ic48"><use href="#i-bigline"/></svg><span class="ticked">线条</span></button>
            <div class="col">
                <button class="tool tick" aria-label="箭头"><svg class="ic24"><use href="#i-arrow"/></svg></button>
                <button class="tool tick" aria-label="椭圆"><svg class="ic24"><use href="#i-ell"/></svg></button>
                <button class="tool tick" aria-label="矩形"><svg class="ic24"><use href="#i-rect"/></svg></button>
            </div>
            <div class="col">
                <button class="tool tick" aria-label="折线"><svg class="ic24"><use href="#i-pline"/></svg></button>
                <button class="tool tick" aria-label="多边形"><svg class="ic24"><use href="#i-poly"/></svg></button>
                <button class="tool tick" aria-label="云状"><svg class="ic24"><use href="#i-cloud"/></svg></button>
            </div>
            <i class="sep"></i>
            <button class="big narrow"><svg class="ic48"><use href="#i-stamp"/></svg>图章<i class="caret"></i></button>
            <i class="sep"></i>
            <div class="col">
                <button class="tool tick" aria-label="铅笔"><svg class="ic24"><use href="#i-pencil"/></svg></button>
                <button class="tool" aria-label="橡皮擦"><svg class="ic24"><use href="#i-eraser"/></svg></button>
            </div>
            <div class="col">
                <button class="measure"><svg class="ic24"><use href="#i-dist"/></svg><span class="ticked">距离</span></button>
                <button class="measure"><svg class="ic24"><use href="#i-perim"/></svg><span class="ticked">周长</span></button>
                <button class="measure"><svg class="ic24"><use href="#i-area"/></svg><span class="ticked">面积</span></button>
            </div>
            <svg class="over"><use href="#i-over"/></svg>
        </div>

        <div class="options">
            <button class="color-swatch" aria-label="线条颜色"></button><i class="caret"></i>
            <i class="sep"></i>
            <div class="combo opacity">
                <i class="checker"></i>
                <select aria-label="不透明度"><option>100%</option></select>
                <i class="caret"></i>
            </div>
            <i class="sep"></i>
            <button class="fill-button" aria-label="填充"><svg class="ic24"><use href="#i-fill"/></svg></button><i class="caret"></i>
            <i class="sep"></i>
            <button class="labeled pressed"><svg class="ic24"><use href="#i-pin"/></svg>保持选定</button>
            <button class="labeled"><svg class="ic24"><use href="#i-crown"/></svg>独占模式</button>
            <div class="over-pair">
                <svg class="over"><use href="#i-over"/></svg>
                <svg class="over"><use href="#i-over"/></svg>
            </div>
        </div>

        <div class="tabs">
            <div class="tab">5页-英文文件-英语六级听力<button aria-label="关闭标签">×</button></div>
            <button class="tab-add" aria-label="新标签">✚</button>
            <button class="tab-close" aria-label="关闭文档">✖</button>
        </div>

        <main class="workspace">
            <aside class="panel thumbs">
                <div class="panel-title">缩略图<button aria-label="关闭面板">×</button></div>
                <div class="panel-tools">
                    <button aria-label="选项"><svg class="ic24"><use href="#i-gears"/></svg></button><i class="caret"></i>
                    <i class="sep"></i>
                    <button aria-label="放大缩略图"><svg class="ic24"><use href="#i-plus"/></svg></button>
                    <button aria-label="缩小缩略图"><svg class="ic24"><use href="#i-minus"/></svg></button>
                    <i class="sep"></i>
                    <button aria-label="向左旋转"><svg class="ic24"><use href="#i-rotl"/></svg></button>
                    <button aria-label="向右旋转"><svg class="ic24"><use href="#i-rotr"/></svg></button>
                    <svg class="more"><use href="#i-more"/></svg>
                    <svg class="over low"><use href="#i-over"/></svg>
                </div>
                <div class="thumb-area">
                    <ol class="thumb-list">
                        <li class="current">
                            <svg class="page-thumb" viewBox="0 0 79 110">
                                <rect class="paper" x="1" y="1" width="77" height="108" rx="2"/>
                                <rect x="10" y="13" width="60" height="30" fill="#fff"/>
                                <path class="bold-lines" d="M11 15.500h6M11 17.500h10M11 72.500h36M11 83.500h10"/>
                                <path class="text-lines" d="M11 19.500h32M11 22.500h28M11 24.500h58M13 26.500h14M11 28.500h16M11 30.500h58M13 32.500h40M11 34.500h12M11 36.500h58M13 38.500h46M11 40.500h12M11 45.500h44M11 47.500h16M11 49.500h58M13 51.500h50M11 53.500h20M11 55.500h58M13 57.500h22M11 59.500h58M13 61.500h48M11 63.500h14M11 65.500h32M11 74.500h30M11 76.500h28M11 78.500h36M11 80.500h26M11 85.500h58M13 87.500h10M11 89.500h58M13 91.500h56M13 93.500h54M11 95.500h44M11 97.500h58"/>
                                <rect x="10" y="13" width="60" height="30" fill="none" stroke="#fd9a64" stroke-width="2"/>
                                <use href="#i-frame"/>
                            </svg>
                            <span>1</span>
                        </li>
                        <li>
                            <svg class="page-thumb" viewBox="0 0 79 110">
                                <rect class="paper" x="1" y="1" width="77" height="108" rx="2"/>
                                <path class="bold-lines" d="M11 37.500h36M11 48.500h8M11 80.500h34M11 92.500h8"/>
                                <path class="text-lines" d="M13 11.500h56M13 13.500h56M13 15.500h40M11 17.500h58M13 19.500h20M11 21.500h58M13 23.500h56M13 25.500h56M13 27.500h56M13 29.500h56M13 31.500h52M13 33.500h8M11 39.500h24M11 41.500h32M11 43.500h24M11 45.500h36M13 51.500h56M11 53.500h58M11 55.500h58M11 57.500h58M11 59.500h58M11 61.500h58M11 63.500h58M11 65.500h58M11 67.500h58M11 69.500h58M11 71.500h58M11 73.500h58M11 75.500h18M11 82.500h30M11 84.500h26M11 86.500h34M11 88.500h28M13 94.500h56M11 96.500h58M11 98.500h18"/>
                                <use href="#i-frame"/>
                            </svg>
                            <span>2</span>
                        </li>
                        <li>
                            <svg class="page-thumb" viewBox="0 0 79 110">
                                <rect class="paper" x="1" y="1" width="77" height="108" rx="2"/>
                                <path class="bold-lines" d="M11 39.500h34M11 48.500h8M11 95.500h34"/>
                                <path class="text-lines" d="M13 11.500h56M11 13.500h58M11 15.500h50M13 19.500h56M11 21.500h58M11 23.500h58M11 25.500h58M11 27.500h58M13 31.500h56M11 33.500h30M11 41.500h44M11 43.500h30M13 52.500h56M11 54.500h58M11 56.500h58M11 58.500h58M11 60.500h58M11 62.500h12M13 65.500h56M11 67.500h58M11 69.500h58M11 71.500h58M13 75.500h56M11 77.500h58M11 79.500h58M11 81.500h58M11 83.500h58M11 85.500h58M11 87.500h58M11 89.500h58"/>
                                <use href="#i-frame"/>
                            </svg>
                        </li>
                    </ol>
                    <svg class="watermark"><use href="#i-pages"/></svg>
                    <div class="vscroll">
                        <button aria-label="向上"><i class="tri up"></i></button>
                        <div class="thumb thumb-half"></div>
                        <div class="track"></div>
                        <button aria-label="向下"><i class="tri down"></i></button>
                    </div>
                </div>
            </aside>

            <div class="splitter"><button aria-label="折叠面板"><i class="tri left"></i></button></div>

            <section class="panel viewer">
                <div class="view-row">
                    <article class="page">
                        <h2>Section A</h2>
                        <h3>Conversation one</h3>
                        <p><b>M:</b><span>Guess what? The worst food I’ve ever had was in Paris.</span></p>
                        <p><b>W:</b><span>Really? That’s odd. I thought the French were all good cooks.</span></p>
                        <p><b>M:</b><span>Yes, that’s right. I suppose it’s like that in bigger cities, though. You know, some places are good, some bad. But it’s really all our own thoughts on it.</span></p>
                        <p><b>W:</b><span>What do you mean?</span></p>
                        <p><b>M:</b><span>Well, it was the first time I’ve ever been over there, and I was staying for a week or two with some of my parents’ friends from my father’s school.</span></p>
                        <p><b>W:</b><span>A school trip?</span></p>
                        <p><b>M:</b><span>Right. Most of them had never been abroad before either, and we took the ferry early one day and set off through France. And breakfast that very first morning was something in a really awful little roadside café. There we all were, tired and hungry, and no food.</span></p>
                        <p><b>W:</b><span>What was that?</span></p>
                        <p><b>M:</b><span>Bacon and eggs.</span></p>
                        <p><b>W:</b><span>Fantastic. The real English breakfast.</span></p>
                        <p><b>M:</b><span>Yes. Anyway, we didn’t know what it was, just cheese and ugh...</span></p>
                    </article>
                    <div class="vscroll">
                        <button aria-label="向上"><i class="tri up"></i></button>
                        <div class="track short"></div>
                        <div class="thumb thumb-small"></div>
                        <div class="track"></div>
                        <button aria-label="向下"><i class="tri down"></i></button>
                    </div>
                </div>
                <div class="hscroll">
                    <button aria-label="向左"><i class="tri left"></i></button>
                    <div class="track"></div>
                    <div class="thumb"></div>
                    <div class="track"></div>
                    <button aria-label="向右"><i class="tri right"></i></button>
                    <i class="corner"></i>
                </div>
                <div class="status">
                    <button aria-label="选项"><svg class="ic24"><use href="#i-gears"/></svg></button><i class="caret"></i>
                    <i class="sep"></i>
                    <svg class="more"><use href="#i-more"/></svg>
                    <button class="page-first" aria-label="第一页"><svg class="ic24"><use href="#i-first"/></svg></button>
                    <button aria-label="上一页"><svg class="ic24"><use href="#i-prev"/></svg></button>
                    <input class="page-input" type="text" aria-label="页码">
                    <div class="status-right">
                        <button class="single" aria-label="单页"><svg class="ic18"><use href="#i-page"/></svg></button>
                        <button class="pressed" aria-label="连续"><svg class="ic24"><use href="#i-cont"/></svg></button>
                        <button aria-label="双页"><svg class="ic24"><use href="#i-two"/></svg></button>
                        <svg class="more"><use href="#i-more"/></svg>
                        <div class="combo zoom-level">
                            <select aria-label="缩放"><option>125%</option></select>
                            <i class="caret"></i>
                        </div>
                        <i class="sep"></i>
                        <button aria-label="缩小"><svg class="ic24"><use href="#i-minus"/></svg></button>
                        <input class="zoom-slider" type="range" min="0" max="100" value="51" aria-label="缩放滑块">
                        <svg class="more"><use href="#i-more"/></svg>
                        <svg class="more last"><use href="#i-more"/></svg>
                        <svg class="over high"><use href="#i-over"/></svg>
                    </div>
                </div>
            </section>
        </main>
    </div>
</body>
</html>
```
FILE: styles.css
```css
* { box-sizing: border-box; }

body {
    margin: 0;
    height: 100vh;
    overflow: hidden;
    display: flex;
    flex-direction: column;
    font-family: "Noto Sans", "Noto Sans CJK SC", sans-serif;
    font-size: 12px;
    line-height: 18px;
    color: #000;
    background-color: #e8e8e8;
    border-right: 2px solid #0c0e14;
    border-bottom: 1px solid #000;
}

button, select, input { font: inherit; color: inherit; }

button {
    padding: 0;
    border: 1px solid transparent;
    background: none;
    white-space: nowrap;
    cursor: pointer;
}

svg { display: block; flex-shrink: 0; }

.sprite { position: absolute; width: 0; height: 0; visibility: hidden; }
.ic14 { width: 14px; height: 14px; }
.ic18 { width: 18px; height: 24px; }
.ic24 { width: 24px; height: 24px; }
.ic48 { width: 48px; height: 46px; }
.over { width: 8px; height: 8px; }
.more { width: 9px; height: 12px; }

.caret {
    border: 3px solid transparent;
    border-top: 4px solid #555;
    border-bottom: 0;
}

.sep {
    width: 1px;
    margin: 0 3px;
    background-color: #d5d5d5;
}

.pressed {
    border: 1px solid #9c8240;
    border-radius: 2px;
    background-image: linear-gradient(#ecd9a6, #fbe08c 60%, #fdeaa5);
    box-shadow: inset 0 1px 2px rgba(90, 70, 20, 0.5);
}

/* Barra de titulo */
.titlebar {
    display: flex;
    align-items: center;
    height: 34px;
    padding: 0 2px 0 5px;
    margin-right: -2px;
    background-color: #23252f;
    color: #fff;
}

.app-title {
    flex: 1;
    margin: 0 0 0 8px;
    font-size: 15px;
    font-weight: normal;
}

.title-link {
    display: flex;
    align-items: center;
    gap: 6px;
    margin-right: 12px;
}

.avatar { width: 31px; height: 31px; }
.user-name { margin: 0 40px 0 30px; }

.window-buttons {
    display: flex;
    gap: 12px;
    margin: 0 6px 0 18px;
}

/* Ventana */
.client {
    flex: 1;
    min-height: 0;
    display: flex;
    flex-direction: column;
    margin: 0 5px;
    background-color: #f7f7f7;
}

.menubar {
    display: flex;
    gap: 1px;
    height: 31px;
    padding: 1px 0 2px 1px;
    border-bottom: 1px solid #d0d0d0;
}

.menubar > button, .menu-root > button { padding: 0 8px; }

.menu-root > .open {
    height: 100%;
    border: 1px solid #c3a656;
    border-radius: 2px;
    background-image: linear-gradient(#f6e9c4, #f3dd9a 49%, #fdf098 51%, #fdf3b4);
}

.menubar-right {
    display: flex;
    gap: 5px;
    margin-left: auto;
}

.menubar-right button {
    display: flex;
    align-items: center;
    gap: 2px;
}

/* Menus desplegables */
.menu-root { position: relative; }

.menu {
    position: absolute;
    z-index: 10;
    margin: 0;
    padding: 2px 3px;
    list-style: none;
    border: 2px solid #858585;
    border-radius: 3px;
    background-color: #f7f7f7;
    box-shadow: 1px 1px 4px rgba(0, 0, 0, 0.4);
}

.menu-tools { top: 100%; left: -1px; width: 113px; }
.menu-annot { top: -4px; left: 100%; width: 162px; }

.menu li { position: relative; }

.menu li > button {
    position: relative;
    display: flex;
    align-items: center;
    width: 100%;
    height: 28px;
    padding: 2px 14px 0;
}

.menu li > button::after {
    content: "";
    margin-left: auto;
    margin-right: -4px;
    border: 4px solid transparent;
    border-left-color: #555;
    border-right: 0;
}

.menu-annot li > button {
    gap: 4px;
    padding: 2px 12px 0 12px;
}

.menu li > .leaf::after { display: none; }

.menu li > .selected {
    border: 1px solid #c3a656;
    border-radius: 2px;
    background-image: linear-gradient(#f8edcb, #f2de9e 48%, #fdf098 52%, #fdf3b4);
}

.split::before {
    content: "";
    position: absolute;
    top: 0;
    bottom: 0;
    right: 23px;
    border-left: 1px solid #c3a656;
}

.check {
    position: absolute;
    left: 2px;
    width: 10px;
    height: 10px;
}

.menu .divider {
    height: 7px;
    background: linear-gradient(#d0d0d0, #d0d0d0) center / 100% 1px no-repeat;
}

.gallery-popup {
    position: absolute;
    z-index: 11;
    top: -4px;
    left: 100%;
    width: 306px;
    padding: 4px;
    border: 2px solid #858585;
    border-radius: 3px;
    background-color: #f7f7f7;
    box-shadow: 1px 1px 4px rgba(0, 0, 0, 0.4);
}

.gallery {
    display: grid;
    grid-template-columns: repeat(4, 70px);
    gap: 4px 3px;
    padding: 1px;
    border: 1px solid #999;
    border-radius: 3px;
    background-color: #fff;
    box-shadow: inset 0 0 2px #999;
}

.swatch {
    height: 90px;
    border: 1px solid #efefef;
    background-color: #f1f1f1;
}

.swatch svg {
    width: 68px;
    height: 68px;
    background-color: #fff;
}

.swatch span { display: block; color: #000; line-height: 20px; }

.red { color: #ef5350; }
.purple { color: #ab47bc; }
.indigo { color: #5c6bc0; }
.blue { color: #42a5f5; }
.green { color: #66bb6a; }
.yellow { color: #ffee58; }
.black { color: #000; }

.palette-link {
    display: flex;
    align-items: center;
    gap: 2px;
    height: 30px;
    padding-left: 13px;
}

/* Herramientas */
.toolbar {
    display: flex;
    height: 87px;
    padding: 1px 0;
    border-bottom: 1px solid #d0d0d0;
}

.toolbar .sep { margin: 2px 3px; }

.big {
    display: flex;
    flex-direction: column;
    align-items: center;
    width: 56px;
    padding-top: 2px;
}

.big .ic48 { margin-bottom: 3px; }
.big .caret { margin-top: 2px; }
.big.narrow { width: 51px; }

.col {
    display: grid;
    grid-auto-rows: 28px;
    align-content: start;
}

.tool {
    position: relative;
    display: flex;
    align-items: center;
    width: 28px;
    padding-left: 1px;
}

.drop { width: 40px; gap: 5px; }
.off .caret { opacity: 0.6; }
.history { margin-right: 3px; }
.after-zoom { margin-left: 108px; }
.after-zoom + .col { margin-left: 4px; }

.tick::after, .ticked::after {
    content: "";
    position: absolute;
    right: 0;
    bottom: 2px;
    border: 2px solid #222;
    border-top-color: transparent;
    border-left-color: transparent;
}

.ticked { position: relative; padding-right: 5px; margin-right: -5px; }

.measure {
    display: flex;
    align-items: center;
    gap: 3px;
    padding-left: 3px;
}

.toolbar > .over { margin: 1px 0 0 auto; }

/* Opciones */
.options {
    display: flex;
    align-items: center;
    height: 31px;
    padding-left: 4px;
}

.options .sep { height: 25px; margin: 0 4px; }
.options > .caret { margin: 0 2px 0 6px; }

.color-swatch {
    width: 22px;
    height: 22px;
    border: 1px solid #8a2020;
    background-color: #f00;
}

.combo {
    display: flex;
    align-items: center;
    height: 24px;
    padding: 0 4px 0 2px;
    border: 2px solid #a2a2a2;
    border-radius: 3px;
    background-color: #fff;
}

.combo select {
    flex: 1;
    min-width: 0;
    padding: 0 0 0 4px;
    border: 0;
    appearance: none;
    background: none;
}

.opacity { width: 74px; }
.zoom-level { width: 82px; font-size: 13px; }
.zoom-level select { padding-left: 0; }

.checker {
    width: 16px;
    height: 16px;
    background: repeating-conic-gradient(#000 0 25%, #fff 0 50%) 0 0 / 4px 4px;
}

.fill-button { border: 0; }

.labeled {
    display: flex;
    align-items: center;
    gap: 3px;
    height: 28px;
    padding: 0 1px;
}

.labeled + .labeled { margin-left: 3px; }

.over-pair {
    display: flex;
    flex-direction: column;
    justify-content: space-between;
    align-self: stretch;
    margin-left: auto;
    padding: 2px 0 1px;
}

/* Pestanas */
.tabs {
    display: flex;
    height: 26px;
    border-top: 2px solid #5a5f5a;
    border-bottom: 1px solid #ddd;
    background-image: linear-gradient(#8a8a8a, #6c6c6c 15%, #6c6c6c 80%, #808080);
}

.tab {
    display: flex;
    align-items: center;
    width: 180px;
    padding: 0 3px 0 7px;
    background-color: #f7f7f7;
}

.tab button { margin: -6px 0 0 auto; }

.tab-add, .tab-close {
    width: 20px;
    color: #fff;
    font-size: 13px;
    border-right: 1px solid #444;
}

.tab-close {
    margin-left: auto;
    border-right: 0;
    border-left: 1px solid #444;
}

/* Zona de trabajo */
.workspace {
    flex: 1;
    min-height: 0;
    display: flex;
    padding: 2px 3px 8px 3px;
    background-color: #efefef;
}

.panel {
    display: flex;
    flex-direction: column;
    min-width: 0;
    border: 2px solid #777;
    border-radius: 3px;
    background-color: #f7f7f7;
}

.thumbs { width: 200px; padding: 0 2px 1px; }

.panel-title {
    display: flex;
    justify-content: space-between;
    align-items: center;
    height: 24px;
    padding-left: 2px;
}

.panel-title button { margin-top: -4px; }

.panel-tools {
    display: flex;
    align-items: center;
    height: 32px;
    padding-bottom: 1px;
    border: 1px solid #e0e0e0;
    border-bottom-color: #777;
}

.panel-tools button + button { margin-left: 2px; }
.panel-tools .sep, .status .sep { height: 26px; margin: 0 4px; }
.panel-tools .caret { margin: 0 3px 0 5px; }
.panel-tools .more { margin-left: 4px; }
.low { align-self: flex-end; margin-left: auto; }
.high { align-self: flex-start; }

.thumb-area {
    position: relative;
    flex: 1;
    min-height: 0;
    display: flex;
    border-left: 1px solid #999;
    background-color: #fff;
}

.thumb-list {
    flex: 1;
    margin: 0;
    padding: 0;
    overflow: hidden;
    list-style: none;
}

.thumb-list li {
    display: flex;
    flex-direction: column;
    align-items: center;
    gap: 2px;
    width: 144px;
    height: 140px;
    padding-top: 2px;
    font-size: 13px;
    line-height: 22px;
    border: 2px solid transparent;
    border-radius: 2px;
}

.thumb-list .current {
    border-color: #fdcb66;
    background-image: linear-gradient(135deg, #fff, #e2e2e2);
}

.current span {
    width: 100%;
    text-align: center;
    background-image: linear-gradient(90deg, #fff0c4, #ffd970);
}

.page-thumb {
    width: 79px;
    height: 110px;
    filter: drop-shadow(0 1px 2px rgba(0, 0, 0, 0.4));
}

.paper { fill: #fff; stroke: #555; stroke-width: 2px; }
.current .paper { fill: #f3f3f3; }
.text-lines { stroke: #cbcbcb; stroke-dasharray: 4 1 2 1 3 1; }
.bold-lines { stroke: #999; }

.watermark {
    position: absolute;
    right: 26px;
    bottom: 9px;
    width: 42px;
    height: 46px;
}

/* Barras de desplazamiento */
.vscroll {
    display: flex;
    flex-direction: column;
    width: 15px;
    border-left: 1px solid #777;
}

.vscroll button, .hscroll button {
    display: flex;
    align-items: center;
    justify-content: center;
    width: 14px;
    height: 14px;
    border: 1px solid #999;
    border-radius: 2px;
    background-color: #fcfcfc;
}

.track { flex: 1; background-image: linear-gradient(90deg, #c0c0c0, #e0e0e0); }
.short { flex: none; height: 9px; }

.thumb {
    display: flex;
    align-items: center;
    justify-content: center;
    border: 1px solid #999;
    border-radius: 2px;
    background-image: linear-gradient(90deg, #fcfcfc, #ededed);
}

.vscroll .thumb::before {
    content: "";
    width: 6px;
    height: 5px;
    border-top: 1px solid #666;
    border-bottom: 1px solid #666;
    background: linear-gradient(#666, #666) center / 6px 1px no-repeat;
}

.thumb-half { height: 190px; }
.thumb-small { height: 22px; }

.hscroll {
    display: flex;
    height: 15px;
    border-top: 1px solid #777;
}

.hscroll .thumb { flex: 7; }
.hscroll .corner { width: 15px; background-color: #b0b0b0; }
.hscroll .track { background-image: linear-gradient(#d4d4d4, #bcbcbc); }

.tri { border: 4px solid transparent; }
.tri.up { border-bottom-color: #555; border-top: 0; }
.tri.down { border-top-color: #555; border-bottom: 0; }
.tri.left { border-right-color: #444; border-left: 0; }
.tri.right { border-left-color: #444; border-right: 0; }

.splitter {
    display: flex;
    align-items: center;
    width: 6px;
    background-image: linear-gradient(90deg, #b8b8b8, #8a8a8a);
}

.splitter button {
    display: flex;
    align-items: center;
    justify-content: center;
    width: 6px;
    height: 62px;
    border: 1px solid #888;
    border-radius: 3px;
    background-color: #fff;
}

.splitter .tri { border-width: 3px 3px 3px 0; }

/* Documento */
.viewer { flex: 1; }

.view-row {
    flex: 1;
    min-height: 0;
    display: flex;
    background-color: #fff;
}

.page {
    flex: 1;
    padding: 9px 23px 0 26px;
    overflow: hidden;
    font-family: "Liberation Serif", serif;
    font-size: 15px;
    line-height: 22px;
    color: #2b2b2b;
}

.page h2 { margin: 0; font-size: 20px; line-height: 23px; }
.page h3 { margin: 0; font-size: 15px; line-height: 24px; }

.page p {
    display: flex;
    margin: 0 0 1px;
    text-align: justify;
}

.page b { flex: 0 0 26px; font-weight: normal; }

.status {
    display: flex;
    align-items: center;
    height: 31px;
    padding-left: 2px;
}

.status .caret { margin: 0 2px 0 6px; }
.status > .more { margin-left: 1px; }
.page-first { margin-left: 74px; }
.page-first + button { margin-left: 2px; }

.page-input {
    width: 80px;
    height: 25px;
    margin-left: 2px;
    border: 2px solid #a2a2a2;
    border-radius: 3px;
    background-color: #fff;
}

.status-right {
    display: flex;
    align-items: center;
    height: 100%;
    margin-left: auto;
    padding-right: 1px;
}

.single { margin-right: 3px; }
.status-right .more { margin: 0 4px 0 3px; }
.status-right .last { margin-left: 11px; }
.status-right .combo .caret { margin: 0; }

.zoom-slider {
    width: 102px;
    height: 24px;
    margin: 0 1px;
    appearance: none;
    background: linear-gradient(#777, #777) center / 100% 1px no-repeat;
}

.zoom-slider::-webkit-slider-thumb {
    appearance: none;
    width: 7px;
    height: 24px;
    border: 1px solid #666;
    border-radius: 2px;
    background-color: #fff;
}
```
